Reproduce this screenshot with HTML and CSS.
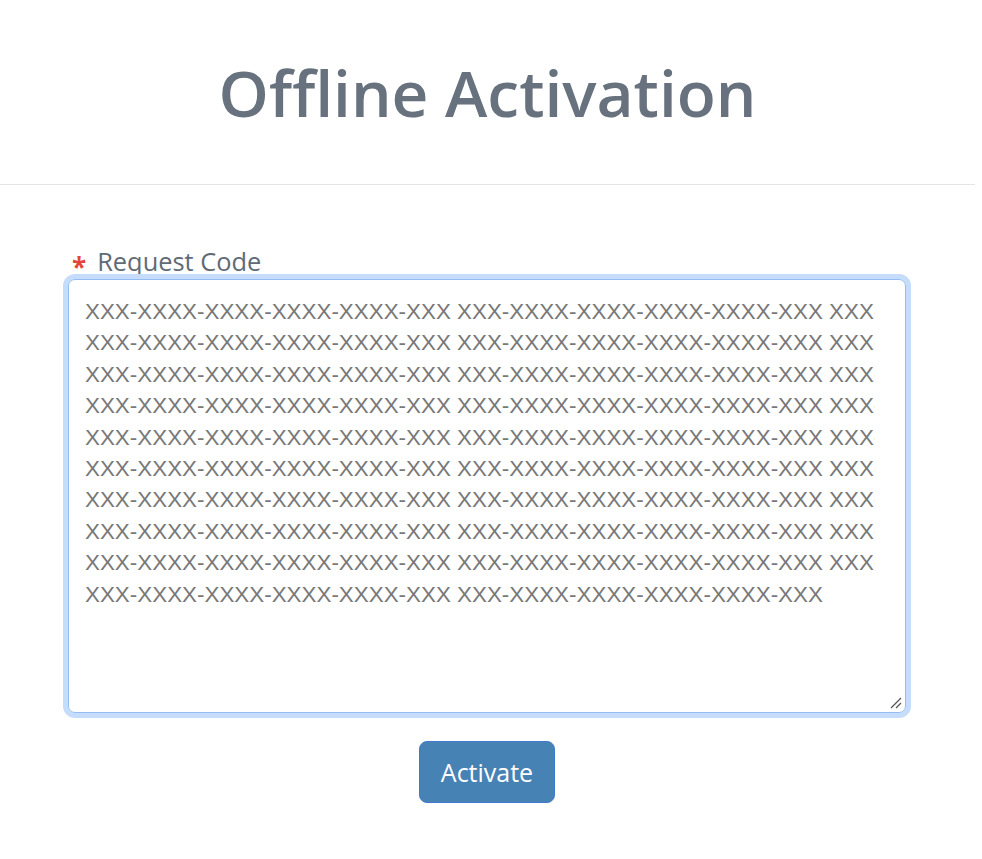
FILE: index.html
```html
<!DOCTYPE html>
<html lang="en">
<head>
<meta charset="UTF-8">
<meta name="viewport" content="width=device-width, initial-scale=1.0">
<title>Offline Activation</title>
<link rel="stylesheet" href="styles.css">
</head>
<body>
<div class="page">
    <header class="header">
        <h1 class="title">Offline Activation</h1>
    </header>

    <form class="form" onsubmit="return false;">
        <label class="label" for="request-code"><span class="required">*</span>Request Code</label>
        <div class="code-box" id="request-code">
            <div class="code-lines">
                <div>XXX-XXXX-XXXX-XXXX-XXXX-XXX XXX-XXXX-XXXX-XXXX-XXXX-XXX XXX-XXXX-XXXX-XXXX-XXXX-XXX</div>
                <div>XXX-XXXX-XXXX-XXXX-XXXX-XXX XXX-XXXX-XXXX-XXXX-XXXX-XXX XXX-XXXX-XXXX-XXXX-XXXX-XXX</div>
                <div>XXX-XXXX-XXXX-XXXX-XXXX-XXX XXX-XXXX-XXXX-XXXX-XXXX-XXX XXX-XXXX-XXXX-XXXX-XXXX-XXX</div>
                <div>XXX-XXXX-XXXX-XXXX-XXXX-XXX XXX-XXXX-XXXX-XXXX-XXXX-XXX XXX-XXXX-XXXX-XXXX-XXXX-XXX</div>
                <div>XXX-XXXX-XXXX-XXXX-XXXX-XXX XXX-XXXX-XXXX-XXXX-XXXX-XXX XXX-XXXX-XXXX-XXXX-XXXX-XXX</div>
                <div>XXX-XXXX-XXXX-XXXX-XXXX-XXX XXX-XXXX-XXXX-XXXX-XXXX-XXX XXX-XXXX-XXXX-XXXX-XXXX-XXX</div>
                <div>XXX-XXXX-XXXX-XXXX-XXXX-XXX XXX-XXXX-XXXX-XXXX-XXXX-XXX XXX-XXXX-XXXX-XXXX-XXXX-XXX</div>
                <div>XXX-XXXX-XXXX-XXXX-XXXX-XXX XXX-XXXX-XXXX-XXXX-XXXX-XXX XXX-XXXX-XXXX-XXXX-XXXX-XXX</div>
                <div>XXX-XXXX-XXXX-XXXX-XXXX-XXX XXX-XXXX-XXXX-XXXX-XXXX-XXX XXX-XXXX-XXXX-XXXX-XXXX-XXX</div>
                <div>XXX-XXXX-XXXX-XXXX-XXXX-XXX XXX-XXXX-XXXX-XXXX-XXXX-XXX</div>
            </div>
            <svg class="grip" width="12" height="12" viewBox="0 0 12 12">
                <line x1="11" y1="1" x2="1" y2="11" stroke="#555" stroke-width="1.3"/>
                <line x1="11" y1="6" x2="6" y2="11" stroke="#555" stroke-width="1.3"/>
            </svg>
        </div>
        <div class="actions">
            <button class="btn" type="submit">Activate</button>
        </div>
    </form>
</div>
</body>
</html>
```

FILE: styles.css
```css
body {
    margin: 0;
    padding: 0;
    background-color: #fff;
    font-family: "Open Sans", "Noto Sans", sans-serif;
}

.page {
    width: 975px;
}

.header {
    height: 184px;
    border-bottom: 1px solid #e4e4e4;
    display: flex;
    justify-content: center;
}

.title {
    margin: 0;
    padding-top: 47px;
    font-size: 64px;
    font-weight: 600;
    line-height: 92px;
    color: #67727e;
}

.form {
    padding: 60px 69px 0 68px;
}

.label {
    display: block;
    font-size: 25.4px;
    line-height: 32px;
    color: #606b76;
    margin-bottom: 2px;
}

.required {
    color: #e5463a;
    font-size: 26px;
    font-weight: 700;
    position: relative;
    top: 6px;
    margin-left: 4px;
    margin-right: 11px;
}

.code-box {
    position: relative;
    height: 434px;
    border: 1px solid #93bcf2;
    border-radius: 7px;
    box-shadow: 0 0 0 5px #c5dcfb;
    padding: 16px 0 0 16px;
    box-sizing: border-box;
}

.code-lines {
    width: 790px;
    overflow: hidden;
    white-space: nowrap;
    font-family: "Liberation Sans", Arial, sans-serif;
    font-size: 22.4px;
    line-height: 31.4px;
    color: #787878;
}

.grip {
    position: absolute;
    right: 3px;
    bottom: 3px;
}

.actions {
    display: flex;
    justify-content: center;
    padding-top: 28px;
}

.btn {
    width: 136px;
    height: 62px;
    border: 1px solid #3f7bcc;
    border-radius: 8px;
    background-color: #4682b4;
    color: #fff;
    font-family: "Open Sans", "Noto Sans", sans-serif;
    font-size: 25px;
    cursor: pointer;
}
```
